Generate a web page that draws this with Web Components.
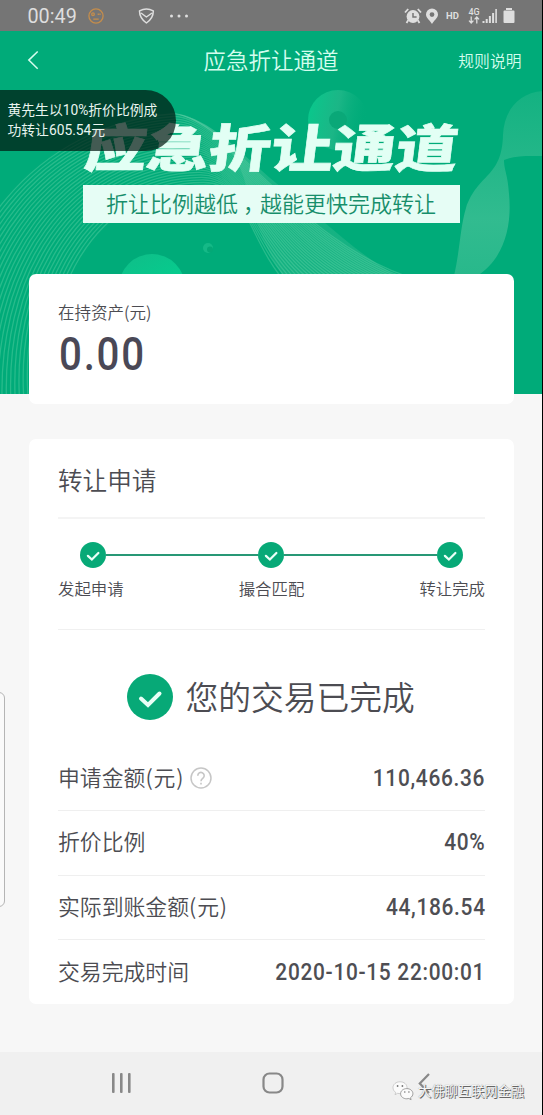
<!DOCTYPE html>
<html lang="zh-CN">
<head>
<meta charset="utf-8">
<title>应急折让通道</title>
<style>
html,body{margin:0;padding:0}
body{width:543px;height:1115px;overflow:hidden;background:#f7f7f7;font-family:"Noto Sans CJK SC",sans-serif;color:#4c4c52;font-weight:350}
</style>
</head>
<body>
<transfer-app></transfer-app>
<script>
function define(name, html, after) {
  const t = document.createElement('template');
  t.innerHTML = html;
  customElements.define(name, class extends HTMLElement {
    constructor() {
      super();
      this.attachShadow({mode: 'open'}).appendChild(t.content.cloneNode(true));
    }
    connectedCallback() { if (after) after(this, this.shadowRoot); }
  });
}

define('status-bar', `
<style>
:host{display:flex;box-sizing:border-box;height:31px;background:#757575;color:#dedede;align-items:center;padding:0 28px 0 27.5px}
.time{font:400 19.8px/31px Roboto,sans-serif;width:59px;padding-top:1px}
.gap{flex:1}
.hd{font:700 9.5px Roboto,sans-serif;width:21px;letter-spacing:.1px}
.net{display:grid;justify-items:center;width:14px;font:500 9px/8px Roboto,sans-serif}
svg{display:block}
</style>
<span class="time">00:49</span>
<svg width="18" height="18" viewBox="0 0 18 18" fill="none" stroke="#c48d4c" stroke-width="1.3"><circle cx="9" cy="9" r="7.1"/><circle cx="6" cy="7.2" r="1.3"/><path d="M11.300 6.500v1.600M13 6.500v1.600M6.300 12.200h5.400"/></svg>
<svg style="margin-left:33px" width="17" height="18" viewBox="0 0 17 18" fill="none" stroke="#dedede" stroke-width="1.5" stroke-linejoin="round"><path d="M1.5 3.8Q8.4 .4 15.3 3.8Q15.5 11 8.4 16Q1.4 11 1.5 3.8ZM3 6l5.4 4L14 6"/></svg>
<svg style="margin-left:14px" width="20" height="6" viewBox="0 0 20 6" fill="#dedede"><circle cx="2.5" cy="3" r="1.5"/><circle cx="10" cy="3" r="1.5"/><circle cx="17.5" cy="3" r="1.5"/></svg>
<span class="gap"></span>
<svg width="18" height="18" viewBox="0 0 18 18" fill="#dedede"><circle cx="9" cy="9.5" r="6.4"/><path d="M4.2 13.2L2.5 16M13.8 13.2L15.5 16M1 5.5L4.2 2M17 5.5L13.8 2" stroke="#dedede" stroke-width="1.8"/><path d="M9 6v4h3.6" fill="none" stroke="#757575" stroke-width="1.5"/></svg>
<svg style="margin:0 7px 0 3px" width="14" height="18" viewBox="0 0 14 18" fill="#dedede"><path fill-rule="evenodd" d="M7 1.5A6 6 0 0 0 1 7.6C1 11 5 13.5 7 17C9 13.5 13 11 13 7.6A6 6 0 0 0 7 1.5ZM7 5.2A2.4 2.4 0 1 1 7 10A2.4 2.4 0 0 1 7 5.2Z"/></svg>
<span class="hd">HD</span>
<span class="net"><span>4G</span><svg width="12" height="8" viewBox="0 0 12 8" fill="none" stroke="#dedede" stroke-width="1.3"><path d="M3.2 .5v6M1 4.6L3.2 7 5.4 4.6M8.8 7.5v-6M6.600 3.4L8.800 1l2.200 2.400"/></svg></span>
<svg style="margin-left:1px" width="16" height="16" viewBox="0 0 16 16" fill="#dedede"><path d="M.5 13h2v2h-2zM3.700 11h2v4h-2zM6.900 8h2v7h-2zM10.100 5h2v10h-2zM13.300 1h1.600v14h-1.600z"/></svg>
<svg style="margin-left:5px" width="12" height="17" viewBox="0 0 12 17" fill="#dedede"><path d="M3 1h6v2H3zM1.500 3.500h9a1 1 0 0 1 1 1V15a1 1 0 0 1-1 1h-9a1 1 0 0 1-1-1V4.500a1 1 0 0 1 1-1Z"/></svg>
`);

define('title-bar', `
<style>
:host{display:grid;grid-template-columns:176.500px auto 1fr;box-sizing:border-box;align-items:center;height:58px;padding:0 21.500px 0 27px;color:#d4fdee}
.t{font-size:22.5px;padding-bottom:2px}
.r{font-size:15.8px;justify-self:end}
</style>
<svg width="12" height="20" viewBox="0 0 12 20" fill="none" stroke="currentColor" stroke-width="1.5"><path d="M10.700 1.500L1.800 10.100l8.900 8.600"/></svg>
<span class="t"><slot></slot></span>
<span class="r"><slot name="action"></slot></span>
`);

define('wave-art', `
<style>:host{display:block}svg{display:block}</style>
<svg width="543" height="363" viewBox="0 31 543 363">
<defs>
<linearGradient id="a" x1="0" y1=".2" x2="1" y2=".4"><stop offset="0" stop-color="#09d091" stop-opacity=".8"/><stop offset=".5" stop-color="#2dbd8f" stop-opacity=".6"/><stop offset="1" stop-color="#00ab79" stop-opacity="0"/></linearGradient>
<linearGradient id="b" x1="0" y1="0" x2=".5" y2="1"><stop offset="0" stop-color="#10bd88"/><stop offset="1" stop-color="#00d491"/></linearGradient>
<linearGradient id="c" x1="0" y1="0" x2="0" y2="1"><stop offset="0" stop-color="#6fd0a9" stop-opacity=".18"/><stop offset=".7" stop-color="#76d2ae" stop-opacity=".42"/><stop offset="1" stop-color="#76d2ae" stop-opacity=".34"/></linearGradient>
<linearGradient id="d" x1="0" y1="0" x2="1" y2="1"><stop offset="0" stop-color="#9fe0c6" stop-opacity=".42"/><stop offset=".5" stop-color="#6fd0a9" stop-opacity=".16"/><stop offset="1" stop-color="#6fd0a9" stop-opacity=".26"/></linearGradient>
</defs>
<rect y="31" width="543" height="363" fill="#00ab79"/>
<circle cx="338" cy="120" r="30" fill="url(#a)"/>
<circle cx="338" cy="120" r="9" fill="#0aa878"/>
<path d="M172 113C205 120 232 145 242 173C252 200 258 245 290 285H420C370 270 320 215 285 190C245 160 215 118 172 113Z" fill="url(#d)"/>
<g id="lines" fill="none" stroke="#5fd3a6" stroke-width="1.300" opacity=".42"></g>
<circle cx="152" cy="287" r="33" fill="url(#b)"/>
<circle cx="208" cy="248" r="5" fill="#15b987"/><circle cx="210" cy="249.500" r="3" fill="#04a876"/>
<path d="M543 91C517 93 504 112 503 135C502 178 478 173 466 208C460 228 460 250 454 276H477C505 258 512 225 509 194C508 175 504 170 504 160C515 155 530 156 543 156Z" fill="url(#c)"/>
</svg>
`, (el, root) => {
  const g = root.getElementById('lines');
  const outer = [-70,420,-60,230,40,125,172,114,225,112,300,250,425,282];
  const inner = [58,420,30,300,95,185,205,185,250,185,245,240,292,290];
  const n = 28;
  for (let i = 0; i <= n; i++) {
    const p = outer.map((v, k) => (v + (inner[k] - v) * i / n).toFixed(1));
    const e = document.createElementNS('http://www.w3.org/2000/svg', 'path');
    e.setAttribute('d', 'M' + p.slice(0, 2) + 'C' + p.slice(2, 8) + 'C' + p.slice(8));
    g.appendChild(e);
  }
});

define('hero-banner', `
<style>
:host{display:block;position:relative;height:363px;background:#00ab79}
wave-art{position:absolute;inset:0;z-index:0}
.in{position:relative;display:flex;flex-direction:column;align-items:center}
title-bar{align-self:stretch}
.big{font:900 51px/60px "Noto Sans CJK SC",sans-serif;white-space:nowrap;color:#e2fff4;-webkit-text-stroke:.600px #e2fff4;transform:skewX(-7deg) scaleX(1.22);margin:26px 0 0 2px}
.rib{box-sizing:border-box;width:377px;height:38px;margin:10px 0 0 -1px;background:#e6fdf5;color:#178e6b;font-size:22px;line-height:35px;text-align:center;white-space:nowrap}
.c{font-feature-settings:"halt";padding:0 6px 0 5px}
</style>
<wave-art></wave-art>
<div class="in">
<title-bar>应急折让通道<span slot="action">规则说明</span></title-bar>
<div class="big">应急折让通道</div>
<div class="rib">折让比例越低<span class="c">，</span>越能更快完成转让</div>
</div>
`);

define('toast-note', `
<style>
:host{display:block;position:absolute;left:0;top:90px;box-sizing:border-box;width:176px;height:61px;padding:10px 0 0 7.500px;background:rgba(0,22,14,.7);border-radius:0 31px 31px 0;color:#e9f5f0;font:400 13.800px/20.300px Roboto,"Noto Sans CJK SC",sans-serif;white-space:nowrap}
</style><slot></slot>`);

define('info-card', `
<style>:host{display:block;box-sizing:border-box;width:485px;margin-left:29px;padding:0 29px;background:#fff;border-radius:7px;position:relative}</style><slot></slot>`);

define('asset-total', `
<style>
:host{display:block;height:130px;box-sizing:border-box;padding-top:26px}
.l{font-size:16.500px;line-height:24px}
.v{font:500 46px/54px Roboto,sans-serif;letter-spacing:2px;color:#4a4856;margin:3px 0 0 1px;transform:scaleX(.875);transform-origin:left}
</style>
<div class="l"><slot></slot></div><div class="v"><slot name="value"></slot></div>`);

define('check-dot', `
<style>:host{display:block;width:26px;height:26px}svg{display:block;width:100%;height:100%}</style>
<svg viewBox="0 0 46 46"><circle cx="23" cy="23" r="23" fill="#07a977"/><path d="M14 24.500l7 6.500L32.500 19.500" fill="none" stroke="#e9fff7" stroke-width="4" stroke-linecap="round"/></svg>`);

define('step-track', `
<style>
:host{display:block;height:111px;box-sizing:border-box;padding-top:23px;border-bottom:1px solid #f0f0f0}
.dots{display:flex;align-items:center;padding:0 22px 0 21.500px}
i{flex:1;height:1.500px;background:#289876}
.labels{display:flex;justify-content:space-between;font-size:16.400px;line-height:24px;margin-top:8px}
</style>
<div class="dots"><check-dot></check-dot><i></i><check-dot></check-dot><i></i><check-dot></check-dot></div>
<div class="labels"><slot></slot></div>`);

define('result-head', `
<style>
:host{display:flex;align-items:center;padding:0 0 0 69px;height:117px;margin-top:9px;font-size:32.750px;line-height:46px;white-space:nowrap}
check-dot{width:46px;height:46px;margin:0 12.500px 1px 0}
span{padding-bottom:4px}
</style><check-dot></check-dot><span><slot></slot></span>`);

define('detail-row', `
<style>
:host{display:flex;align-items:center;justify-content:space-between;height:64.500px;box-sizing:border-box;border-bottom:1px solid #efefef;font-size:21.850px;white-space:nowrap}
:host(:last-of-type){border-bottom:0}
.l{display:flex;align-items:center;line-height:30px;padding-bottom:3px}
.v{font:500 24px/30px Roboto,sans-serif;color:#4e4e53;letter-spacing:.800px;margin-right:-.300px;padding-bottom:1px;transform:scaleX(.87);transform-origin:right}
</style><span class="l"><slot></slot></span><span class="v"><slot name="value"></slot></span>`);

define('unit-mark', `
<style>:host{display:inline}.u{padding:0 .040em}</style>(<span class="u"><slot></slot></span>)`);

define('help-icon', `
<style>:host{display:block;margin:2px 0 0 7px}svg{display:block}</style>
<svg width="22" height="22" viewBox="0 0 22 22" fill="none" stroke="#c6c6c6" stroke-width="1.500"><circle cx="11" cy="11" r="10"/><path d="M7.800 8.700a3.200 3.200 0 1 1 5.300 2.300C11.700 12.100 11 12.600 11 14.200M11 15.800v1.700" stroke-width="1.600"/></svg>`);

define('edge-handle', `
<style>:host{display:block;position:absolute;left:-11px;top:692px;width:14px;height:213px;border:1px solid #b5b5b5;border-radius:6px;background:#fafafa}</style>`);

define('nav-bar', `
<style>
:host{position:absolute;left:0;top:1052px;width:543px;height:63px;background:#f0f0f0;display:block}
.keys{display:flex;align-items:center;padding:20px 0 0 111px;height:22px}
svg{display:block}
.wm{position:absolute;left:392px;top:28px;display:flex;align-items:center;gap:4px;font-size:13.250px;line-height:22px;font-weight:400;color:#f4f4f4;text-shadow:1px 1px 0 #666,0 0 1px #888;white-space:nowrap}
</style>
<div class="keys">
<svg width="20" height="20" viewBox="0 0 20 20" fill="#888"><rect x="1" y="0" width="2.600" height="20" rx="1"/><rect x="9" y="0" width="2.600" height="20" rx="1"/><rect x="17" y="0" width="2.600" height="20" rx="1"/></svg>
<svg style="margin:0 134.500px 0 130.500px" width="22" height="22" viewBox="0 0 22 22" fill="none" stroke="#888" stroke-width="2.200"><rect x="1.500" y="1.500" width="19" height="19" rx="6"/></svg>
<svg width="12" height="21" viewBox="0 0 12 21" fill="none" stroke="#888" stroke-width="2.200"><path d="M11 1L1.800 10.500 11 20"/></svg>
</div>
<div class="wm">
<svg width="22" height="20" viewBox="0 0 22 20"><path d="M8 .800C4 .800 1 3.300 1 6.700c0 2 1 3.600 2.700 4.700L3 13.700l2.700-1.400 2.300.400c4 0 7-2.500 7-6S12 .800 8 .800Z" fill="#fbfbfb" stroke="#bbb" stroke-width=".700"/><path d="M14.800 7.600c-3.500 0-6.200 2.200-6.200 5.100s2.700 5.100 6.200 5.100l2-.300 2.300 1.200-.600-2c1.500-1 2.400-2.300 2.400-4 0-2.900-2.700-5.100-6.100-5.100Z" fill="#fbfbfb" stroke="#888" stroke-width=".800"/><g fill="#777"><circle cx="5.600" cy="5" r=".900"/><circle cx="10.400" cy="5" r=".900"/><circle cx="12.800" cy="11" r=".800"/><circle cx="16.900" cy="11" r=".800"/></g></svg>
<span>大佛聊互联网金融</span></div>`);

define('transfer-app', `
<style>
:host{display:block;position:relative;width:543px;height:1115px;overflow:hidden}
.top{margin-top:-120px}
.main{margin-top:35px;height:565px}
h2{margin:0;height:80px;box-sizing:border-box;border-bottom:2px solid #f4f4f4;font-size:24.600px;font-weight:350;line-height:81px}
.rows{margin-top:-9.500px}
.edge{position:absolute;right:0;top:0;width:1px;height:100%;background:#000}
</style>
<status-bar></status-bar>
<hero-banner></hero-banner>
<info-card class="top"><asset-total>在持资产(元)<span slot="value">0.00</span></asset-total></info-card>
<info-card class="main">
<h2>转让申请</h2>
<step-track><span>发起申请</span><span>撮合匹配</span><span>转让完成</span></step-track>
<result-head>您的交易已完成</result-head>
<div class="rows">
<detail-row>申请金额<unit-mark>元</unit-mark><help-icon></help-icon><span slot="value">110,466.36</span></detail-row>
<detail-row>折价比例<span slot="value">40%</span></detail-row>
<detail-row>实际到账金额<unit-mark>元</unit-mark><span slot="value">44,186.54</span></detail-row>
<detail-row>交易完成时间<span slot="value">2020-10-15 22:00:01</span></detail-row>
</div>
</info-card>
<toast-note>黄先生以10%折价比例成<br>功转让605.54元</toast-note>
<edge-handle></edge-handle>
<nav-bar></nav-bar>
<div class="edge"></div>
`);
</script>
</body>
</html>
